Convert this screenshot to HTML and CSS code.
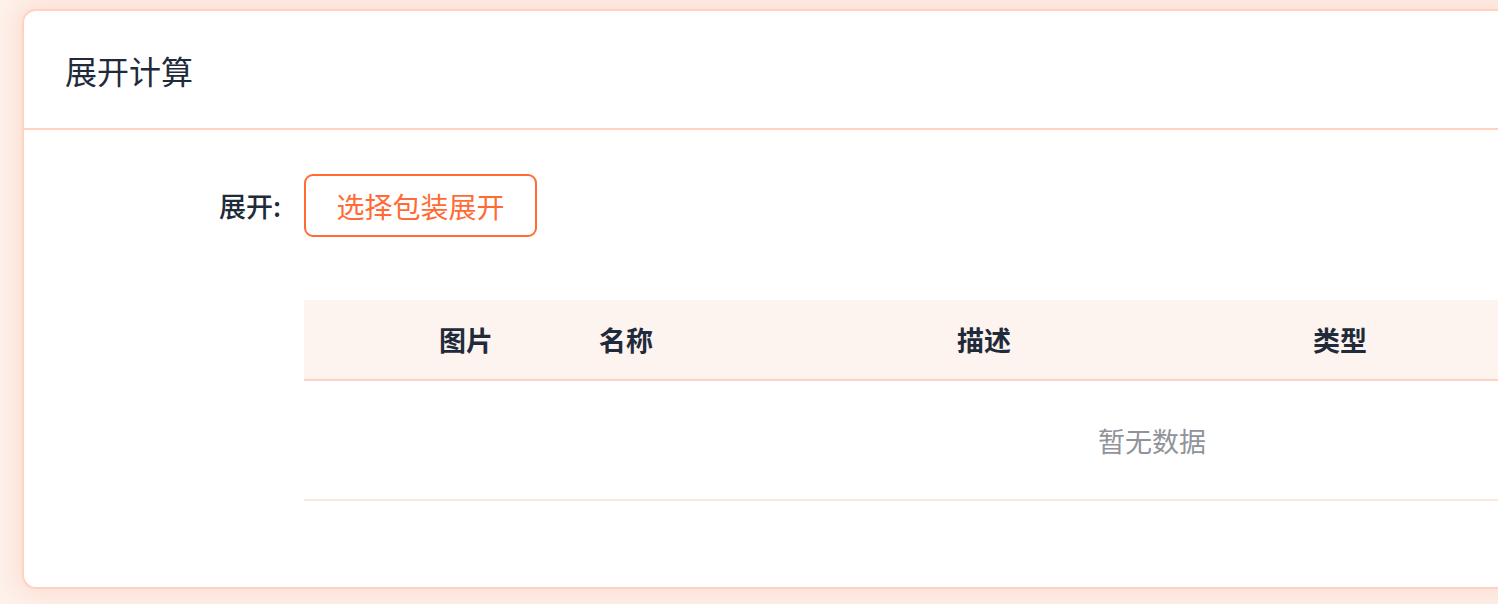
FILE: index.html
```html
<!DOCTYPE html>
<html lang="zh-CN">
<head>
<meta charset="utf-8">
<title>展开计算</title>
<link rel="stylesheet" href="styles.css">
</head>
<body>
<div class="page">
  <section class="card">
    <header class="card-header">展开计算</header>
    <div class="card-body">
      <div class="form-row">
        <label class="form-label">展开:</label>
        <button class="btn-outline" type="button">选择包装展开</button>
      </div>
      <div class="form-row">
        <div class="form-label"></div>
        <div class="table">
          <div class="thead">
            <div class="th"></div>
            <div class="th">图片</div>
            <div class="th">名称</div>
            <div class="th">描述</div>
            <div class="th">类型</div>
            <div class="th"></div>
          </div>
          <div class="empty">暂无数据</div>
        </div>
      </div>
    </div>
  </section>
</div>
</body>
</html>
```

FILE: styles.css
```css
html, body {
  margin: 0;
  padding: 0;
  overflow: hidden;
  height: 100%;
}
body {
  background: #fdf2ec;
  font-family: "Noto Sans CJK SC", "Noto Sans", sans-serif;
  color: #1f2b3a;
}
.page {
  padding: 9px 0 0 22px;
  width: 2200px;
}
.card {
  width: 2100px;
  background: #fff;
  border: 2px solid #ffd2c2;
  border-radius: 14px;
  box-shadow: 0 0 24px 6px rgba(255, 170, 140, 0.28);
}
.card-header {
  height: 119px;
  box-sizing: border-box;
  padding-left: 41px;
  display: flex;
  align-items: center;
  font-size: 32px;
  font-weight: 400;
  border-bottom: 2px solid #ffd2c2;
  padding-top: 1px;
}
.card-body {
  padding: 44px 0 86px 0;
  display: flex;
  flex-direction: column;
  gap: 63px;
}
.form-row {
  display: flex;
  align-items: center;
}
.form-label {
  width: 281px;
  box-sizing: border-box;
  padding-right: 24px;
  text-align: right;
  font-size: 27px;
  font-weight: 500;
  flex: none;
}
.btn-outline {
  width: 233px;
  margin-left: -1px;
  height: 63px;
  background: #fff;
  border: 2px solid #ff6a35;
  border-radius: 9px;
  color: #ff6a35;
  font-family: inherit;
  font-size: 28px;
  font-weight: 400;
  padding: 0;
  cursor: pointer;
}
.table {
  width: 1696px;
  margin-left: -1px;
  flex: none;
  align-self: flex-start;
}
.thead {
  display: grid;
  grid-template-columns: 80px 164px 156px 560px 152px 1fr;
  height: 79px;
  background: #fdf3ef;
  border-bottom: 2px solid #ffd2c2;
  align-items: center;
}
.th {
  text-align: center;
  font-size: 27px;
  font-weight: 700;
}
.empty {
  height: 118px;
  display: flex;
  align-items: center;
  justify-content: center;
  font-size: 27px;
  color: #909399;
  border-bottom: 2px solid #fde6de;
}
```
